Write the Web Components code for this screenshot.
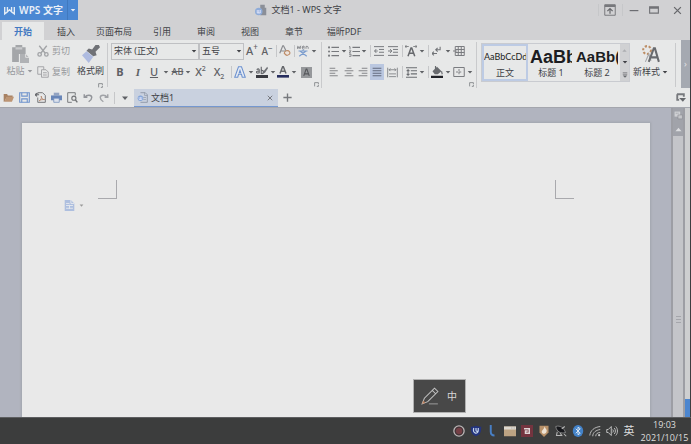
<!DOCTYPE html>
<html lang="zh-CN">
<head>
<meta charset="utf-8">
<title>文档1 - WPS 文字</title>
<style>
html,body{margin:0;height:100%}
body{font-family:"Noto Sans","Noto Sans CJK SC",sans-serif;font-size:9px;line-height:12px;color:#404146;overflow:hidden}
</style>
</head>
<body>
<wps-app></wps-app>
<script>
const P={
logo:'<path d="M1 3v10l4-3V3M15 3v10l-4-3V3M5 10l3-3 3 3" fill="none" stroke="#e4ecf5" stroke-width="2"/>',
caret:'<path d="M2 5h12l-6 7z" fill="currentColor"/>',
up:'<path d="M1 12h14L8 4z" fill="currentColor"/>',
app:'<path d="M7 1h6v4h2v10H7z" fill="#8b8f98"/><circle cx="5" cy="10" r="5" fill="#8facd9"/><path d="M3 8v4h4V8M5 8v4" fill="none" stroke="#eef" />',
share:'<path d="M1 1h14v14H1z" fill="none" stroke="#77787c" stroke-width="1.3"/><path d="M1 1h14v3H1z" fill="#77787c"/><path d="M8 13V6M4.500 9.500L8 6l3.500 3.500" fill="none" stroke="#68696d" stroke-width="1.6"/>',
min:'<path d="M1 9h14" stroke="#66676b" stroke-width="1.800"/>',
max:'<path d="M1 3h14v10H1z" fill="none" stroke="#717276" stroke-width="1.8"/><path d="M1 3h14v3H1z" fill="#717276"/>',
close:'<path d="M2 2l12 12M14 2L2 14" stroke="#66676b" stroke-width="2.200"/>',
paste:'<path d="M1 2h3V0h6v2h3v6H7v7H1z" fill="#a4a6a9"/><path d="M4 2h6v2H4z" fill="#c9cacc"/><path d="M8 8h5l3 3v5H8z" fill="#b0b2b5"/><path d="M13 8v3h3" stroke="#e6e6e6" fill="none" stroke-width=".8"/>',
cut:'<g fill="none" stroke="#a2a4a7" stroke-width="1.800"><path d="M3 1l8 10M13 1L5 11"/><circle cx="3.500" cy="12.500" r="2.300"/><circle cx="12.500" cy="12.500" r="2.300"/></g>',
copy:'<g fill="#e7e8e8" stroke="#a2a4a7" stroke-width="1.300"><path d="M1 1h8v10H1z"/><path d="M6 5h6l3 3v7H6z"/><path d="M8 9h5M8 12h5"/></g>',
brush:'<path d="M12 0l3 0 1 2-4 4 1 3-3 1-6-5 2-2 3 1z" fill="#707277"/><path d="M4 5.500l6 5-4 5.500L0 9z" fill="#aebbe0"/>',
launch:'<path d="M2 14V2h12v5M14 9v5h-5" fill="none" stroke="#797b7f" stroke-width="2.500"/>',
folder:'<path d="M1 3h5l1 2h7v3H5l-3 6H1z" fill="#a78162"/><path d="M5 7h11l-3 7H2z" fill="#bd9574"/>',
save:'<g fill="none" stroke="#6f93cc" stroke-width="1.600"><path d="M1 1h14v14H1z"/><path d="M4 1v5h8V1M4 15V10h8v5"/></g>',
pdf:'<path d="M4 3V1h7l4 4v10H4V8" fill="none" stroke="#737477" stroke-width="1.400"/><path d="M0 4h6M3 1.500L0 4l3 2.500" fill="none" stroke="#66686c" stroke-width="1.500"/><path d="M6 13c3-2 4-5 3-7 1 4 2 5 5 5-3 0-6 0-8 2" fill="none" stroke="#b38369" stroke-width="1.200"/>',
print:'<path d="M4 1h8v4H4z" fill="#93a3c1"/><path d="M0 5h16v7H0z" fill="#6986b8"/><path d="M4 9h8v6H4z" fill="#dbe1ec" stroke="#6986b8"/>',
preview:'<path d="M12 5V1H1v14h6" fill="none" stroke="#77797c" stroke-width="1.400"/><circle cx="10" cy="9" r="3" fill="none" stroke="#717376" stroke-width="1.600"/><path d="M12 11l3 4" stroke="#717376" stroke-width="2"/>',
undo:'<path d="M2 2v5h5M3 7c3-5 11-4 11 0 0 3-2 5-5 7" fill="none" stroke="#93959a" stroke-width="2.300"/>',
redo:'<path d="M14 2v5H9M13 7C10 2 2 3 2 7c0 3 2 5 5 7" fill="none" stroke="#a1a3a7" stroke-width="2.300"/>',
doc:'<path d="M5 1h7l3 3v11H5" fill="none" stroke="#8e96a5" stroke-width="1.300"/><path d="M11 1v4h4M9 8h4M9 11h4" fill="none" stroke="#8e96a5"/><circle cx="5" cy="9" r="4" fill="#7da0d6"/><path d="M3 7v4h4V7M5 7v4" fill="none" stroke="#eef"/>',
plus:'<path d="M8 2v12M2 8h12" stroke="#77797d" stroke-width="2"/>',
clear:'<path d="M1 11L5 1h1l4 8M3 8h5" fill="none" stroke="#8a8c90" stroke-width="1.600"/><path d="M7 11c0-3 5-5 7-2s-3 6-5 4z" fill="#ece3dc" stroke="#bd8b66" stroke-width="1.500"/>',
wen:'<path d="M0 1l1 4 1.500-3L4 5l1-4M7 3h3c0-2-3-2-3 0 0 3 2 3 3 2M12 5V2c2-1 3 0 3 3" fill="none" stroke="#77797e" stroke-width="1.100"/><path d="M2 8h12M8 6v2M4 8l9 7M12 8l-9 7" fill="none" stroke="#7c9dce" stroke-width="1.600"/>',
bul:'<g fill="#77797d"><circle cx="1.500" cy="2" r="1.500"/><circle cx="1.500" cy="8" r="1.500"/><circle cx="1.500" cy="14" r="1.500"/></g><path d="M5 2h11M5 8h11M5 14h11" stroke="#77797d" stroke-width="1.500"/>',
num:'<path d="M0 1h1.500v4M0 7h3l-3 3h3M0 12h3v3H0" fill="none" stroke="#77797d" stroke-width="1.200"/><path d="M5 2h11M5 8h11M5 14h11" stroke="#77797d" stroke-width="1.500"/>',
out:'<path d="M0 1h16M8 5.500h8M8 10h8M0 15h16" stroke="#717377" stroke-width="1.500"/><path d="M6 8H1M3.500 5L1 8l2.500 3" fill="none" stroke="#717377" stroke-width="1.500"/>',
ind:'<path d="M0 1h16M8 5.500h8M8 10h8M0 15h16" stroke="#717377" stroke-width="1.500"/><path d="M0 8h6M3.500 5L6 8l-2.500 3" fill="none" stroke="#717377" stroke-width="1.500"/>',
ascale:'<path d="M4 15l4-11h1l4 11M5 11h7" fill="none" stroke="#66686c" stroke-width="2"/><path d="M0 2h5M2 0L0 2l2 2M11 2h5M14 0l2 2-2 2" fill="none" stroke="#66686c"/>',
wrap:'<path d="M13 1v5H6M9 3L6 6l3 3M8 12H0M3 9l-3 3 3 3" fill="none" stroke="#717377" stroke-width="1.700"/>',
table:'<path d="M3 2h12v12H3zM3 6h12M3 10h12M7 2v12M11 2v12M0 8h5" fill="none" stroke="#77797d" stroke-width="1.300"/>',
left:'<path d="M1 2h9M1 6h13M1 10h9M1 14h13" stroke="#77797d" stroke-width="1.400"/>',
center:'<path d="M4 2h8M1 6h14M4 10h8M1 14h14" stroke="#77797d" stroke-width="1.400"/>',
right:'<path d="M6 2h9M1 6h14M6 10h9M1 14h14" stroke="#77797d" stroke-width="1.400"/>',
just:'<path d="M1 2h14M1 6h14M1 10h14M1 14h14" stroke="#626a7d" stroke-width="1.600"/>',
dist:'<path d="M1 1v14M15 1v14M3 4h10M3 10h10M3 14h10M5 2L3 4l2 2M11 2l2 2-2 2" fill="none" stroke="#77797d" stroke-width="1.200"/>',
line:'<path d="M0 1h16M7 5.500h9M7 10h9M0 15h16M3 4v8M1 6l2-2 2 2M1 10l2 2 2-2" fill="none" stroke="#6b6d71" stroke-width="1.500"/>',
fill:'<path d="M8 1l6 6-5 4H5L2 7z" fill="#686a6e"/><path d="M6 0v4M14 7l1 4" stroke="#686a6e" stroke-width="1.500"/><path d="M0 13h16v3H0z" fill="#202127"/>',
border:'<path d="M1 2h14v12H1z" fill="none" stroke="#77797d" stroke-width="1.300"/><path d="M8 4v8M4 8h8" stroke="#77797d" stroke-width="1.200" stroke-dasharray="3 1"/>',
outA:'<path d="M1 15L6 1h4l5 14h-4l-1-4H6l-1 4zM7 9h2L8 6z" fill="#e7ecf4" stroke="#6c91cf" stroke-width="1.400"/>',
hl:'<path d="M1 5c3-3 4 0 3 5M4 7c-5-1-4 4 0 2M7 1v9c4 1 4-5 0-4" fill="none" stroke="#66686c" stroke-width="1.500"/><path d="M15 1l-5 6-2 4 4-2 4-6z" fill="#707277"/><path d="M0 12h16v4H0z" fill="#393a40"/>',
colA:'<path d="M4 10L7.500 1h1L12 10M5 7h6" fill="none" stroke="#66686c" stroke-width="2"/><path d="M0 12h16v3.500H0z" fill="#262d5e"/>',
shadeA:'<path d="M0 0h16v16H0z" fill="#96989b"/><path d="M4 13L7.500 3h1L12 13M5 10h6" fill="none" stroke="#55575b" stroke-width="1.600"/>',
newst:'<g stroke="#bd8e66" stroke-width="1.800" fill="none" stroke-dasharray="2 1.500"><circle cx="4.500" cy="4.500" r="3.500"/></g><path d="M3 15l3-7 2 6" stroke="#a5a7ab" fill="none"/><path d="M6 15L10.500 3h1L15 15M8 11h6" fill="none" stroke="#686a6e" stroke-width="1.800"/>',
more:'<path d="M2 2h12M2 6h12" stroke="#66686c" stroke-width="1.800"/><path d="M2 9h12l-6 6z" fill="#66686c"/>',
tabmenu:'<path d="M1.500 2h11v4M2 2v9h3" fill="none" stroke="#77797d" stroke-width="3"/><path d="M5 8h11l-5 6z" fill="#66686c"/>',
browse:'<path d="M1 1h10v9H1z" fill="#cfd0d4"/><path d="M4 3v2M7 3v2" stroke="#85878d"/><path d="M7 7h8v7H7z" fill="#c5c6ca" stroke="#85878d"/>',
pgdoc:'<path d="M1 0h9l5 5v11H1z" fill="#aebfdf"/><path d="M10 0v5h5M3 5h5M3 8h10M3 12h10M8 7v6" fill="none" stroke="#e4e7ed" stroke-width="1.400"/>',
pencil:'<path d="M1 15l2-5L12 1l3 3-9 9-5 2zM10 3l3 3" fill="none" stroke="#c4c4c4" stroke-width=".900"/><path d="M1 15l1-3 2 2z" fill="#b9805f"/><path d="M7 15h8" stroke="#a5a5a5" stroke-width=".800"/>',
rec:'<circle cx="8" cy="8" r="6.800" fill="#753f45" stroke="#b8b8b8" stroke-width="1.800"/><circle cx="8" cy="8" r="5" fill="none" stroke="#3d3639" stroke-width="1.400"/>',
shield:'<path d="M1 2c4 1 5-1 7-1s3 2 7 1c0 7-1 11-7 13C2 13 1 9 1 2z" fill="#24347e"/><path d="M5 4c-2 8 6 9 6 3V4M8 4v3c0 2 3 2 3 0" fill="none" stroke="#c5d5ed" stroke-width="1.600"/>',
blue:'<path d="M5 0v9c0 3 2 5 5 5" fill="none" stroke="#487fc5" stroke-width="2.600"/>',
win:'<path d="M0 2h16v13H0z" fill="#bda383"/><path d="M0 2h16v4H0z" fill="#ddd8cf"/><path d="M10 4h1M13 4h1" stroke="#777"/>',
red:'<path d="M0 0h16v16H0z" fill="#74343f"/><path d="M4 5h7v6H6V8h3" fill="none" stroke="#dfd5d6" stroke-width="2"/>',
flame:'<path d="M2 1h12v9l-6 6-6-6z" fill="#b89169"/><path d="M9 2c1 4 4 4 2 8-2 3-6 2-6-1 0-2 2-2 4-7z" fill="#eee3d5"/>',
sat:'<path d="M1 2c6-2 11 2 13 8-6 2-12-1-13-8z" fill="#17181c" stroke="#999"/><path d="M3 9l-1 5h7l-2-3M9 5l4-3M12 12l3 3" fill="none" stroke="#b8b8b8" stroke-width="1.400"/>',
bt:'<ellipse cx="8" cy="8" rx="7" ry="8" fill="#4382c8"/><path d="M5 5l6 6-3 2V3l3 2-6 6" fill="none" stroke="#e3edf7" stroke-width="1.200"/>',
wifi:'<g fill="none" stroke="#bbb" stroke-width="1.300"><path d="M1 14C2 7 7 3 15 2M5 15c0-5 4-8 10-9M9 15c0-3 2-5 6-5"/></g><circle cx="13.500" cy="13.500" r="1.400" fill="#ccc"/>',
vol:'<g fill="none" stroke="#ccc" stroke-width="1.200"><path d="M1 6h2l4-4v12l-4-4H1zM9 6c1 1 1 3 0 4M11 4c2 2 2 6 0 8M13 2c3 3 3 9 0 12"/></g>'
};
const define=(name,html)=>customElements.define(name,class extends HTMLElement{
  connectedCallback(){
    if(this.shadowRoot)return;
    const t=document.createElement('template');
    t.innerHTML=typeof html==='function'?html(this):html;
    this.attachShadow({mode:'open'}).append(t.content.cloneNode(true));
  }
});
const base='*,:host{box-sizing:border-box}button{font:inherit;color:inherit;background:none;border:0;padding:0;margin:0;display:flex;align-items:center;justify-content:center;white-space:nowrap}';
const ic=(n,s=12,c='')=>`<wps-icon name="${n}" size="${s}" class="${c}"></wps-icon>`;
const tb=(n,label,w=14,s=12,sel='')=>`<wps-tool icon="${n}" label="${label}" width="${w}" size="${s}" ${sel}></wps-tool>`;
const car=(label,w=8)=>tb('caret',label+'选项',w,6);

define('wps-icon',e=>{const s=e.getAttribute('size');return `<style>:host{display:block;flex:none;width:${s}px;height:${s}px}svg{display:block;width:100%;height:100%}</style><svg viewBox="0 0 16 16" aria-hidden="true">${P[e.getAttribute('name')]}</svg>`});

define('wps-tool',e=>{const n=e.getAttribute('icon');return `<style>${base}:host{display:block;flex:none;width:${e.getAttribute('width')}px;height:16px;color:#5f6165}:host([selected]){background:#bac7e0}button{width:100%;height:100%;font-size:11px;font-weight:500}</style><button type="button" aria-label="${e.getAttribute('label')}">${n?ic(n,e.getAttribute('size')):'<slot></slot>'}</button>`});

define('wps-sep',`<style>:host{display:flex;justify-content:center;flex:none;width:4px;height:12px}i{width:1px;background:#c6c7c9}</style><i></i>`);

define('wps-titlebar',`<style>${base}
:host{display:flex;height:22px;background:#d1d1d3;align-items:center}
.brand{display:flex;width:78px;height:20px;align-self:flex-start;background:#4b88d3;color:#eaf0f8}
.brand .name{flex:1;font-size:10px;font-weight:600;gap:4px}
.brand .drop{width:11px;border-left:1px solid #4079bf}
h1{flex:1;display:flex;justify-content:center;align-items:center;gap:5px;margin:0;padding-right:78px;font:inherit;height:20px;align-self:flex-start}
.win{display:flex;align-items:center;height:20px;align-self:flex-start}
.win button{width:20px;height:20px}
.win .last{width:26px}
</style>
<div class="brand"><button class="name">${ic('logo',11)}WPS 文字</button><button class="drop" aria-label="应用菜单">${ic('caret',6)}</button></div>
<h1>${ic('app',12)}<span>文档1 - WPS 文字</span></h1>
<div class="win"><wps-sep></wps-sep><button aria-label="隐藏功能区">${ic('share',12)}</button><wps-sep></wps-sep><button aria-label="最小化">${ic('min',10)}</button><button aria-label="最大化">${ic('max',10)}</button><button class="last" aria-label="关闭">${ic('close',9)}</button></div>`);

define('wps-menu',`<style>${base}
:host{display:block;background:#d1d1d3}
nav{display:flex;height:18px;padding-left:2px}
button{width:44px;height:18px;padding-top:2px}
.on{width:42px;background:#e7e8e8;color:#4379c2;font-weight:600}
.wide{width:52px}.pdf{width:56px}
</style><nav><button class="on">开始</button><button>插入</button><button class="wide">页面布局</button><button>引用</button><button>审阅</button><button>视图</button><button>章节</button><button class="pdf">福昕PDF</button></nav>`);

define('wps-group',`<style>${base}
:host{display:grid;grid-template-rows:18px 3px 18px 7px;flex:none;border-right:1px solid #c9cacc;height:46px}
::slotted(*){display:flex;align-items:center}
::slotted([slot=a]){grid-row:1}::slotted([slot=b]){grid-row:3}
button{grid-row:4;justify-self:end;width:10px;height:6px;align-self:start}
</style><slot name="a"></slot><slot name="b"></slot><button aria-label="更多设置">${ic('launch',5)}</button>`);

define('wps-combo',e=>`<style>${base}
:host{display:flex;align-items:center;width:${e.getAttribute('width')}px;height:17px;border:1px solid #bfc0c3;padding-right:1px;color:#404146}
select{flex:1;min-width:0;appearance:none;font:inherit;color:inherit;background:none;border:0;padding:0 2px;outline:0}
</style><select aria-label="${e.getAttribute('label')}"><option>${e.getAttribute('value')}</option></select>${ic('caret',6)}`);

define('wps-style',e=>`<style>${base}
:host{display:block;flex:none;width:46px;height:37px}
button{width:100%;height:100%;flex-direction:column;justify-content:flex-end;border:2px solid transparent;overflow:hidden}
:host([selected]) button{border-color:#bdcbe4}
b{display:block;width:100%;height:20px;line-height:20px;overflow:hidden;text-align:left;color:#1c1d22;font-family:${e.getAttribute('face')},sans-serif;font-weight:${e.getAttribute('weight')};font-size:${e.getAttribute('fs')}px}
</style><button><b>${e.getAttribute('sample')}</b><span><slot></slot></span></button>`);

define('wps-ribbon',`<style>${base}
:host{display:flex;height:48px;background:#e7e8e8;align-items:flex-start}
.clip{display:grid;grid-template-columns:31px 40px 31px;width:108px;height:44px;padding-left:4px;margin-top:3px;border-right:1px solid #c9cacc;color:#97999d;position:relative}
.clip>button,.new{flex-direction:column;justify-content:flex-start;padding-top:2px}
.clip .row,.new .row{display:flex;align-items:center;gap:2px;height:15px}
.small{display:flex;flex-direction:column;gap:5px;padding-left:2px}
.small button{gap:3px;height:16px;justify-content:flex-start}
.clip>.fmt{color:#404146}
.corner{position:absolute;right:4px;bottom:0;width:6px;height:6px}
wps-group{margin-top:2px}
.font{width:214px;padding-left:3px}
.para{width:155px;padding-left:4px;margin-right:4px}
.gallery{display:flex;height:39px;margin-top:3px;border:1px solid #c9cbd0;flex:none}
.scroll{display:grid;grid-template-rows:repeat(3,1fr);width:9px;background:#d0d1d3}
.new{position:relative;height:44px;margin-top:3px;width:46px;border-right:1px solid #c9cacc;padding-right:4px;gap:1px}
.fill{flex:1}
.more{width:9px;height:48px;background:#a5a9b1;color:#e1e3e6}
</style>
<div class="clip">
<button>${ic('paste',18)}<span class="row">粘贴${ic('caret',6)}</span></button>
<div class="small"><button>${ic('cut',12)}剪切</button><button>${ic('copy',12)}复制</button></div>
<button class="fmt">${ic('brush',18)}<span class="row">格式刷</span></button>
<button class="corner" aria-label="剪贴板设置">${ic('launch',5)}</button></div>
<wps-group class="font">
<div slot="a"><wps-combo width="88" label="字体" value="宋体 (正文)"></wps-combo><wps-combo width="45" label="字号" value="五号"></wps-combo><wps-tool label="增大字号" width="16"><span>A<sup style="font-size:8px;line-height:0">+</sup></span></wps-tool><wps-tool label="减小字号" width="14"><span style="font-size:10px">A<sup style="font-size:8px;line-height:0">−</sup></span></wps-tool><wps-sep></wps-sep>${tb('clear','清除格式')}<wps-sep></wps-sep>${tb('wen','拼音指南',14)}${car('拼音')}</div>
<div slot="b"><wps-tool label="加粗" width="18"><b>B</b></wps-tool><wps-tool label="倾斜" width="18"><i style="font-family:'Liberation Serif';font-weight:bold">I</i></wps-tool><wps-tool label="下划线" width="14"><u>U</u></wps-tool>${car('下划线',10)}<wps-tool label="删除线" width="13"><s style="font-size:9px">AB</s></wps-tool>${car('删除线')}<wps-tool label="上标" width="17"><span>X<sup style="font-size:7px;line-height:0">2</sup></span></wps-tool><wps-tool label="下标" width="20"><span>X<sub style="font-size:7px;line-height:0">2</sub></span></wps-tool><wps-sep></wps-sep>${tb('outA','文字效果')}${car('文字效果')}${tb('hl','突出显示')}${car('突出显示')}${tb('colA','字体颜色',12)}${car('字体颜色',10)}${tb('shadeA','字符底纹',14,11)}</div>
</wps-group>
<wps-group class="para">
<div slot="a">${tb('bul','项目符号',14,11)}${car('项目符号')}${tb('num','编号',12,11)}${car('编号')}<wps-sep></wps-sep>${tb('out','减少缩进',14,10)}${tb('ind','增加缩进',14,10)}<wps-sep></wps-sep>${tb('ascale','中文版式')}${car('中文版式')}<wps-sep></wps-sep>${tb('wrap','显示段落标记',14,10)}${car('段落标记')}${tb('table','制表位',14,12)}</div>
<div slot="b">${tb('left','左对齐',16,10)}${tb('center','居中',14,10)}${tb('right','右对齐',14,10)}${tb('just','两端对齐',14,10,'selected')}${tb('dist','分散对齐',16,11)}<wps-sep></wps-sep>${tb('line','行距',14,11)}${car('行距')}<wps-sep></wps-sep>${tb('fill','底纹')}${car('底纹')}${tb('border','边框')}${car('边框')}</div>
</wps-group>
<div class="gallery"><wps-style selected sample="AaBbCcDd" face="Lato" fs="9" weight="400">正文</wps-style><wps-style sample="AaBb" face="Liberation Sans" fs="18" weight="700">标题 1</wps-style><wps-style sample="AaBb(" face="Liberation Sans" fs="15" weight="700">标题 2</wps-style><div class="scroll"><button aria-label="向上" style="color:#abadb0">${ic('up',5)}</button><button aria-label="向下">${ic('caret',6)}</button><button aria-label="展开样式">${ic('more',6)}</button></div></div>
<button class="new">${ic('newst',18)}<span class="row">新样式${ic('caret',6)}</span></button>
<span class="fill"></span><button class="more" aria-label="更多工具">›</button>`);

define('wps-docbar',`<style>${base}
:host{display:flex;height:19px;background:#e7e8e8;align-items:center}
.tab{display:flex;align-items:center;gap:5px;width:144px;height:18px;align-self:flex-end;margin-left:1px;padding:0 5px 0 3px;background:#c9d1df;border-bottom:1px solid #7598d0}
.tab .t{flex:1;justify-content:flex-start;gap:3px}
.fill{flex:1}
</style>${[['folder','打开'],['save','保存'],['pdf','输出为PDF'],['print','打印'],['preview','打印预览']].map(a=>tb(a[0],a[1],16,11)).join('')}${tb('undo','撤销',16,10)}${tb('redo','恢复',16,10)}<wps-sep></wps-sep>${tb('caret','自定义快速访问',17,8)}
<div class="tab"><button class="t">${ic('doc',11)}文档1</button><button aria-label="关闭文档1">${ic('close',6)}</button></div>${tb('plus','新建',18,11)}<span class="fill"></span>${tb('tabmenu','标签列表',18,10)}`);

define('wps-page',`<style>${base}
:host{display:block;background:#e9e9e9;box-shadow:0 0 2px 1px #a2a6ad}
.marks{display:flex;justify-content:space-between;padding:57px 76px 1px}
.marks i{width:19px;height:19px;border:0 solid #a9a9ad;border-bottom-width:1px}
.marks i:first-child{border-right-width:1px}.marks i:last-child{border-left-width:1px}
.opt{display:flex;gap:4px;margin-left:42px;color:#999}
</style><div class="marks"><i></i><i></i></div><button class="opt" aria-label="页面选项">${ic('pgdoc',11)}${ic('caret',5)}</button>`);

define('wps-scrollbar',`<style>${base}
:host{display:flex;flex-direction:column;flex:none;width:14px;background:#c4c5c9;border:solid #9d9ea4;border-width:0 2px}
button{height:14px;flex:none;background:#a1a3aa;color:#dcdde0}
.s1{flex:19}.s2{flex:10}.grip{height:7px;width:5px;margin:0 auto;border:solid #a5a6ab;border-width:1px 0;display:flex;align-items:center}
.grip i{height:1px;width:5px;background:#a5a6ab}
</style><button aria-label="浏览对象">${ic('browse',9)}</button><button aria-label="向上滚动">${ic('up',7)}</button><span class="s1"></span><span class="grip"><i></i></span><span class="s2"></span>`);

define('wps-work',`<style>
:host{display:flex;flex:1;min-height:0;background:#b1b4bf;border-top:1px solid #a4a6ad}
.view{flex:1;display:flex;padding:15px 21px 0 22px;overflow:hidden}
wps-page{flex:1}
.edge{display:flex;flex-direction:column;justify-content:flex-end;width:5px;background:#cecfd0}
.edge i{height:18px;background:#4c86cf}
</style><div class="view"><wps-page></wps-page></div><wps-scrollbar></wps-scrollbar><div class="edge"><i></i></div>`);

define('wps-taskbar',`<style>${base}
:host{display:flex;justify-content:flex-end;align-items:center;height:27px;background:#3c3d3d;color:#dedede;border-top:1px solid #5d5e60}
button{width:17px;height:24px}
.ime{width:18px;font-size:11px}
.clock{flex-direction:column;width:53px;font-family:"Open Sans",sans-serif;font-size:9px;line-height:13px}
</style>${[['rec','录制'],['shield','安全'],['blue','同步'],['win','窗口'],['red','阅读器'],['flame','防护'],['sat','触控板'],['bt','蓝牙'],['wifi','网络'],['vol','音量']].map(a=>`<button aria-label="${a[1]}">${ic(a[0],12)}</button>`).join('')}<button class="ime">英</button><button class="clock"><span>19:03</span><span>2021/10/15</span></button>`);

define('wps-ime',`<style>${base}
:host{display:flex;align-items:center;gap:8px;padding:0 8px 0 7px;height:34px;background:#484848;border:1px solid #b1b1b1;color:#d8d8d8;font-size:10px}
</style>${ic('pencil',18)}<span>中</span>`);

define('wps-app',`<style>
:host{display:flex;flex-direction:column;height:100vh;position:relative}
main{display:flex;flex-direction:column;flex:1;min-height:0;border-right:1px solid #3c3e40}
wps-taskbar{flex:none}
wps-ime{position:absolute;right:225px;bottom:31px}
</style><main><wps-titlebar></wps-titlebar><wps-menu></wps-menu><wps-ribbon></wps-ribbon><wps-docbar></wps-docbar><wps-work></wps-work></main><wps-taskbar></wps-taskbar><wps-ime></wps-ime>`);
</script>
</body>
</html>
